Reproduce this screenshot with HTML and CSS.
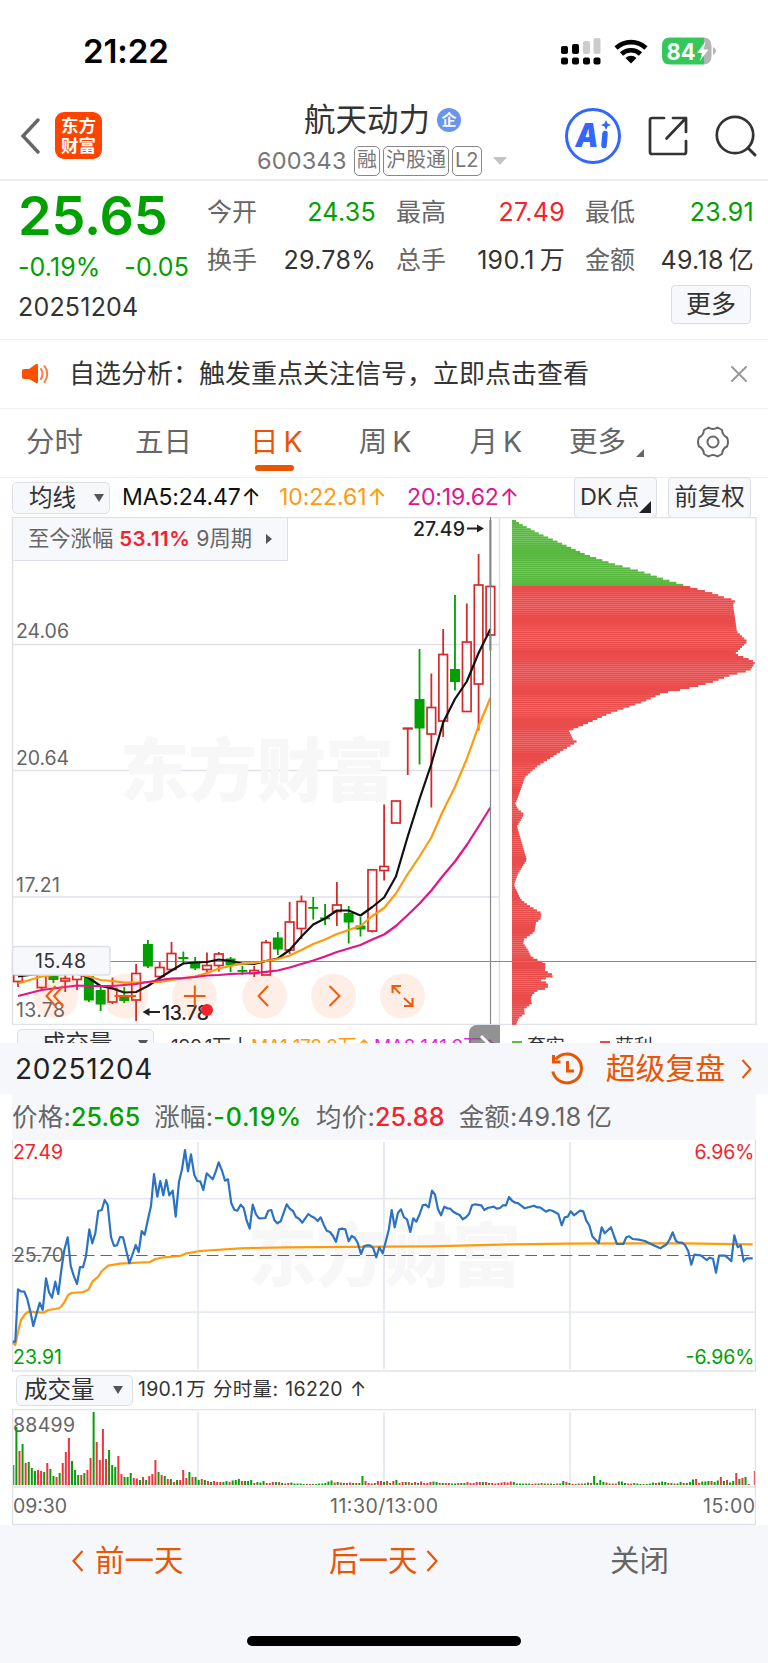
FILE: index.html
```html
<!DOCTYPE html>
<html lang="zh-CN">
<head>
    <meta charset="UTF-8">
    <meta name="viewport" content="width=device-width, initial-scale=1.0">
    <title>航天动力 600343</title>
    <link rel="stylesheet" href="styles.css">
</head>
<body>
    <div class="status-bar">
        <span class="clock">21:22</span>
        <svg class="status-icons" width="158" height="30" viewBox="560 36 158 30">
            <g fill="#000">
                <rect x="561" y="46" width="7" height="8" rx="2"/>
                <rect x="572" y="44" width="7" height="10" rx="2"/>
                <rect x="561" y="57.5" width="7" height="7" rx="2"/>
                <rect x="572" y="57.5" width="7" height="7" rx="2"/>
                <rect x="583" y="57.5" width="7" height="7" rx="2"/>
                <rect x="593.5" y="57.5" width="7" height="7" rx="2"/>
            </g>
            <rect x="583" y="41" width="7" height="13" rx="2" fill="#ccc"/>
            <rect x="593.5" y="38" width="7" height="16" rx="2" fill="#ccc"/>
            <g fill="none" stroke="#000" stroke-width="4.6">
                <path d="M616 48 A22 22 0 0 1 646 48"/>
                <path d="M621.5 54 A14 14 0 0 1 640.5 54"/>
            </g>
            <path d="M625.5 58 A8 8 0 0 1 636.5 58 L631 63.5 Z" fill="#000"/>
            <path d="M670 37.5 H704 V64.5 H670 Q662 64.5 662 56.5 V45.5 Q662 37.5 670 37.5 Z" fill="#34c759"/>
            <path d="M704 37.5 Q711.5 38 711.5 46 V56 Q711.5 64 704 64.5 Z" fill="#b4b4b4"/>
            <path d="M713 47 Q716 48.5 716 51 Q716 53.5 713 55 Z" fill="#b4b4b4"/>
            <text x="666.5" y="59.7" class="battery-text" textLength="29" lengthAdjust="spacingAndGlyphs">84</text>
            <path d="M705.5 41.5 L697 53 H702 L700 61 L708.5 49.5 H703.5 Z" fill="#fff"/>
        </svg>
    </div>

    <div class="nav-bar">
        <svg class="back" width="20" height="36" viewBox="0 0 20 36"><path d="M18 2 L3 18 L18 34" fill="none" stroke="#666" stroke-width="3.4" stroke-linecap="round"/></svg>
        <div class="logo">东方<br>财富</div>
        <div class="stock">
            <div class="stock-name">航天动力<span class="badge">企</span></div>
            <div class="stock-code">
                <span class="code">600343</span>
                <span class="tag">融</span><span class="tag">沪股通</span><span class="tag">L2</span>
                <i class="tri-down"></i>
            </div>
        </div>
        <div class="nav-actions">
            <svg width="58" height="58" viewBox="0 0 58 58">
                <circle cx="29" cy="29" r="26.5" fill="none" stroke="#36f" stroke-width="3"/>
                <text x="11.5" y="40" class="ai-text" textLength="23" lengthAdjust="spacingAndGlyphs">A</text>
                <path d="M41 26.500 L40 38.500" stroke="#36f" stroke-width="5.500" stroke-linecap="round"/>
                <path d="M42 13 L43.5 16.5 L47 18 L43.5 19.5 L42 23 L40.5 19.5 L37 18 L40.5 16.5 Z" fill="#36f"/>
            </svg>
            <svg width="42" height="42" viewBox="0 0 42 42">
                <path d="M17 3 H5 Q3 3 3 5 V37 Q3 39 5 39 H37 Q39 39 39 37 V26 M26 3 H39 V17 M39 3 L19.5 23.5" fill="none" stroke="#333" stroke-width="2.7" stroke-linecap="round" stroke-linejoin="round"/>
            </svg>
            <svg width="44" height="44" viewBox="0 0 44 44">
                <circle cx="21" cy="21" r="18.2" fill="none" stroke="#333" stroke-width="2.7"/>
                <path d="M34 34 L41 41" stroke="#333" stroke-width="3" stroke-linecap="round"/>
            </svg>
        </div>
    </div>

    <div class="quote">
        <div class="quote-main">
            <div class="price">25.65</div>
            <div class="change"><span>-0.19%</span><span>-0.05</span></div>
            <div class="date">20251204</div>
        </div>
        <div class="quote-side">
            <div class="quote-grid">
                <div class="cell"><span>今开</span><b class="down">24.35</b></div>
                <div class="cell"><span>最高</span><b class="up">27.49</b></div>
                <div class="cell"><span>最低</span><b class="down">23.91</b></div>
                <div class="cell"><span>换手</span><b>29.78%</b></div>
                <div class="cell"><span>总手</span><b>190.1<i class="unit">万</i></b></div>
                <div class="cell"><span>金额</span><b>49.18<i class="unit">亿</i></b></div>
            </div>
            <div class="more-btn">更多</div>
        </div>
    </div>

    <div class="notice">
        <svg width="28" height="24" viewBox="0 0 28 24">
            <path d="M2 7 H7 L14 2 Q16 1 16 3 V20 Q16 22 14 21 L7 17 H2 Q0 17 0 15 V9 Q0 7 2 7 Z" fill="#ff5000"/>
            <path d="M19 7 Q22 11.5 19 17 M22.5 4 Q28 11.5 22.5 20" fill="none" stroke="#ff7a3c" stroke-width="2" stroke-linecap="round"/>
        </svg>
        <span class="notice-text">自选分析：触发重点关注信号，立即点击查看</span>
        <svg width="16" height="16" viewBox="0 0 16 16"><path d="M1 1 L15 15 M15 1 L1 15" stroke="#999" stroke-width="2" stroke-linecap="round"/></svg>
    </div>

    <div class="tabs">
        <span>分时</span>
        <span>五日</span>
        <span class="active">日<i class="unit">K</i></span>
        <span>周<i class="unit">K</i></span>
        <span>月<i class="unit">K</i></span>
        <span class="tab-more">更多<i class="corner"></i></span>
        <svg width="34" height="34" viewBox="0 0 34 34" fill="none" stroke="#666" stroke-width="2">
            <path d="M12.5 2.5 Q17 5.5 21.5 2.5 L26 5 Q26.5 10.5 31 12.5 Q33 17 31 21.5 Q26.5 23.500 26 29 L21.5 31.5 Q17 28.5 12.5 31.5 L8 29 Q7.5 23.5 3 21.5 Q1 17 3 12.5 Q7.5 10.5 8 5 Z" stroke-linejoin="round"/>
            <circle cx="17" cy="17" r="5.5"/>
        </svg>
    </div>

    <div class="indicators">
        <div class="select ma-select">均线<i class="caret"></i></div>
        <span class="ma ma5">MA5:24.47<em>↑</em></span>
        <span class="ma ma10">10:22.61<em>↑</em></span>
        <span class="ma ma20">20:19.62<em>↑</em></span>
        <div class="box-btn dk">DK<i class="gap">点</i><i class="corner"></i></div>
        <div class="box-btn">前复权</div>
    </div>

    <div class="kline">
        <svg width="768" height="508" viewBox="0 517 768 508">
            <g class="grid">
                <path d="M12.5 517.5 H756 M12.5 517 V1024.5 H756 V517 M12 644.5 H499.5 M12 770.5 H499.5 M12 897 H499.5 M499.5 517 V1024"/>
            </g>
            <text class="watermark" x="120" y="796" textLength="274">东方财富</text>
            <g id="profile"></g>
            <g class="axis">
                <text x="16" y="637.5" textLength="53">24.06</text>
                <text x="16" y="764.5" textLength="53">20.64</text>
                <text x="16" y="891.5" textLength="44">17.21</text>
                <text x="16" y="1017" textLength="49">13.78</text>
            </g>
            <path class="cross" d="M12 961.5 H756"/>
            <g id="candles"></g>
            <g class="lines">
                <polyline id="ma5" stroke="#111"/>
                <polyline id="ma10" stroke="#ff9a0c"/>
                <polyline id="ma20" stroke="#e0148c"/>
            </g>
            <path class="cross" d="M490.5 517 V1024"/>
            <text class="mark" x="413" y="536" textLength="52">27.49</text>
            <path class="mark-arrow" d="M467 528.5 H480"/><path d="M484 528.5 l-7 -4 v8 z" fill="#222"/>
            <text class="mark" x="162" y="1019.5" textLength="47">13.78</text>
            <path class="mark-arrow" d="M147 1012 H160"/><path d="M142.5 1012 l7 -4 v8 z" fill="#222"/>
            <g class="round-btns">
                <circle cx="56" cy="996" r="22.5"/>
                <circle cx="125.5" cy="996" r="22.5"/>
                <circle cx="194.5" cy="996" r="22.5"/>
                <circle cx="264.5" cy="996" r="22.5"/>
                <circle cx="333.5" cy="996" r="22.5"/>
                <circle cx="402.5" cy="996" r="22.5"/>
            </g>
            <path class="btn-icons" d="M55.5 986 L46.5 996 L55.5 1006 M63 986 L54 996 L63 1006 M114.5 996 H136 M184 996 H205.5 M194.8 985.5 V1006.5 M268 986 L258.5 996 L268 1006 M329.5 986 L339.5 996 L329.5 1006 M392.5 993 V986 H401 M392.5 986 L400 993.5 M412.5 998 V1006 H404 M412.5 1006 L404 998"/>
            <circle cx="207" cy="1010" r="6" fill="#f5222d"/>
            <rect class="panel" x="12.5" y="946.5" width="97.5" height="28.5" rx="3"/>
            <text class="cursor-price" x="35" y="968" textLength="51">15.48</text>
        </svg>
        <div class="range-chip">至今涨幅 <b>53.11%</b> 9周期<i></i></div>
    </div>

    <div class="sub-row">
        <div class="select sub-select">成交量<i class="caret"></i></div>
        <span class="sub-vol">190.1万丨</span>
        <span class="sub-ma1">MA1:178.0万↑</span>
        <span class="sub-ma2">MA2:141.0万↑</span>
        <div class="expand"><svg width="31" height="19" viewBox="0 0 31 19"><path d="M12 11 L22 21" stroke="#fff" stroke-width="3"/></svg></div>
        <span class="legend trapped">套牢</span>
        <span class="legend profit">获利</span>
    </div>

    <div class="sheet">
        <div class="sheet-head">
            <span class="sheet-date">20251204</span>
            <svg width="34" height="34" viewBox="0 0 34 34" fill="none" stroke="#ea5504" stroke-width="3">
                <path d="M5.5 7.5 A14.5 14.5 0 1 1 2.8 19.5"/>
                <path d="M3.5 3 V10 H10.5 M17.5 9 V19 H24"/>
            </svg>
            <span class="replay">超级复盘</span>
            <svg width="11" height="20" viewBox="0 0 11 20"><path d="M1.5 1 L9.5 10 L1.5 19" fill="none" stroke="#ea5504" stroke-width="2"/></svg>
        </div>
        <div class="sheet-body">
            <div class="info">
                <span>价格:<b class="down">25.65</b></span>
                <span>涨幅:<b class="down wide">-0.19%</b></span>
                <span>均价:<b class="up">25.88</b></span>
                <span>金额:49.18<i class="unit">亿</i></span>
            </div>
            <svg class="minute" width="744" height="232" viewBox="12 1140 744 232">
                <path class="grid-thick" d="M198 1142 V1369 M384 1142 V1369 M570 1142 V1369 M12 1198.7 H756 M12 1312.2 H756"/>
                <path class="frame" d="M12.5 1140 V1371 M12 1371 H756 M755.5 1140 V1371"/>
                <text class="watermark" x="248" y="1281" textLength="273">东方财富</text>
                <path d="M12 1255.5 H752" stroke="#666" stroke-width="1.2" stroke-dasharray="11.7 6"/>
                <g class="axis">
                    <text x="13" y="1159" textLength="50" class="up">27.49</text>
                    <text x="13" y="1261.5" textLength="51">25.70</text>
                    <text x="13" y="1363.5" textLength="49" class="down">23.91</text>
                    <text x="754.5" y="1159" text-anchor="end" textLength="60" class="up">6.96%</text>
                    <text x="754.5" y="1363.5" text-anchor="end" textLength="69" class="down">-6.96%</text>
                </g>
                <g class="lines">
                    <polyline id="avg" stroke="#ff9a0c"/>
                    <polyline id="price" stroke="#2b72c4"/>
                </g>
            </svg>
            <div class="vol-head">
                <div class="select vol-select">成交量<i class="caret"></i></div>
                <span>190.1<i class="unit">万</i></span><span>分时量:</span><span>16220</span><span>↑</span>
            </div>
            <svg class="volume" width="744" height="116" viewBox="12 1409 744 116">
                <path class="grid-thick" d="M198 1412 V1485 M384 1412 V1485 M570 1412 V1485"/>
                <g class="axis">
                    <text x="13" y="1431.5" textLength="62">88499</text>
                    <text x="13" y="1513" textLength="54">09:30</text>
                    <text x="384" y="1513" text-anchor="middle" textLength="108">11:30/13:00</text>
                    <text x="755" y="1513" text-anchor="end" textLength="52">15:00</text>
                </g>
                <g id="volume"></g>
                <path class="frame" d="M12 1409.5 H756 M12.5 1409 V1525 M755.5 1409 V1525 M12 1487 H756 M12 1524.5 H756"/>
            </svg>
        </div>
        <div class="sheet-foot">
            <span class="prev"><svg width="12" height="22" viewBox="0 0 12 22"><path d="M10.5 1 L1.5 11 L10.5 21"/></svg>前一天</span>
            <span class="next">后一天<svg width="12" height="22" viewBox="0 0 12 22"><path d="M1.5 1 L10.5 11 L1.5 21"/></svg></span>
            <span class="close">关闭</span>
        </div>
        <div class="home-indicator"></div>
    </div>

    <script src="script.js"></script>
</body>
</html>
```
FILE: styles.css
```css
* {
    box-sizing: border-box;
}

body {
    margin: 0;
    width: 768px;
    height: 1663px;
    overflow: hidden;
    background: #fff;
    color: #333;
    font-family: Inter, "Noto Sans CJK SC", sans-serif;
    font-size: 25px;
    line-height: 1;
    white-space: nowrap;
}

svg {
    display: block;
    flex: none;
}

b, em, i {
    font-weight: 400;
    font-style: normal;
}

.up {
    color: #f5222d;
    fill: #f5222d;
}

.down {
    color: #00a000;
    fill: #00a000;
}

.unit {
    margin-left: 5px;
}

/* status bar */
.status-bar {
    height: 100px;
    padding: 2px 50px 0 83px;
    display: flex;
    align-items: center;
    justify-content: space-between;
}

.clock {
    font-size: 33px;
    font-weight: 600;
    color: #000;
    letter-spacing: -0.1px;
}

.battery-text {
    font-size: 23px;
    font-weight: 700;
    fill: #fff;
}

/* nav bar */
.nav-bar {
    height: 81px;
    border-bottom: 2px solid #ececec;
    display: flex;
    position: relative;
}

.back {
    margin: 18px 0 0 20px;
}

.logo {
    width: 47px;
    height: 47px;
    margin: 12px 0 0 15px;
    padding-top: 4px;
    border-radius: 9px;
    background: #ff4400;
    color: #fff;
    font-size: 17.5px;
    font-weight: 700;
    line-height: 20px;
    text-align: center;
}

.stock {
    margin-left: 155px;
    width: 252px;
}

.stock-name {
    display: flex;
    align-items: center;
    padding-left: 47px;
    margin-top: 4px;
    font-size: 31.5px;
}

.badge {
    width: 24px;
    height: 24px;
    margin-left: 7px;
    border-radius: 50%;
    background: #6a95ee;
    color: #fff;
    font-size: 15px;
    font-weight: 700;
    line-height: 23px;
    text-align: center;
}

.stock-code {
    display: flex;
    align-items: center;
    margin-top: 10px;
    color: #777;
}

.code {
    width: 97px;
    font-size: 23.5px;
    letter-spacing: 0.2px;
}

.tag {
    height: 30px;
    margin-right: 3px;
    padding: 0 2px;
    border: 1.5px solid #888;
    border-radius: 5px;
    font-size: 20px;
    line-height: 27px;
}

.tri-down {
    margin-left: 8px;
    border: 7px solid transparent;
    border-top: 8px solid #c4c4c4;
    border-bottom: 0;
}

.nav-actions {
    position: absolute;
    left: 563.5px;
    top: 7px;
    display: flex;
    align-items: center;
    gap: 25px;
}

.ai-text {
    font-size: 33px;
    font-weight: 900;
    font-style: italic;
    fill: #36f;
}

/* quote */
.quote {
    height: 159px;
    border-bottom: 1px solid #f0f0f0;
    display: flex;
    padding-left: 18px;
}

.quote-main {
    width: 189px;
}

.price {
    margin-top: 8px;
    font-size: 54px;
    font-weight: 600;
    line-height: 54px;
    letter-spacing: -0.2px;
    color: #00a000;
}

.change {
    display: flex;
    justify-content: space-between;
    width: 171px;
    margin-top: 12px;
    color: #00a000;
    font-size: 25px;
    line-height: 25px;
    letter-spacing: 0.1px;
}

.date {
    margin-top: 15px;
    font-size: 25px;
    line-height: 25px;
    letter-spacing: 0.2px;
}

.quote-grid {
    display: grid;
    grid-template-columns: 169px 169px 169px;
    column-gap: 20px;
    row-gap: 17px;
    margin-top: 16px;
}

.cell {
    display: flex;
    justify-content: space-between;
    align-items: center;
    height: 31px;
    font-size: 25px;
}

.cell span {
    color: #666;
}

.cell b {
    letter-spacing: 0.3px;
}

.more-btn {
    width: 80px;
    height: 39px;
    margin: 9px 0 0 464px;
    border: 1.5px solid #d9dce3;
    border-radius: 4px;
    background: #f7f8fb;
    font-size: 25px;
    line-height: 36px;
    text-align: center;
}

/* notice */
.notice {
    height: 69px;
    border-bottom: 1px solid #f0f0f0;
    display: flex;
    align-items: center;
    padding: 0 21px 0 22px;
}

.notice-text {
    flex: 1;
    margin-left: 19px;
    font-size: 26px;
}

/* period tabs */
.tabs {
    height: 69px;
    border-bottom: 1px solid #f0f0f0;
    display: flex;
    align-items: center;
    padding: 0 38px 2px 26px;
    font-size: 28.5px;
    color: #666;
}

.tabs span {
    position: relative;
    margin-right: 52px;
}

.tabs span:nth-child(2) {
    margin-right: 58px;
}

.tabs span:nth-child(3) {
    margin-right: 56px;
}

.tabs span:nth-child(4) {
    margin-right: 58px;
}

.tabs span:nth-child(5) {
    margin-right: 47px;
}

.tabs .active {
    color: #ea5504;
}

.tabs .active::after {
    content: "";
    position: absolute;
    left: 5px;
    bottom: -15px;
    width: 39px;
    height: 6px;
    border-radius: 3px;
    background: #ea5504;
}

.corner {
    position: absolute;
    right: -18px;
    bottom: -1px;
    border-bottom: 8px solid #666;
    border-left: 8px solid transparent;
}

.tabs svg {
    margin-left: auto;
}

/* indicator row */
.indicators {
    height: 39px;
    display: flex;
    align-items: center;
    padding: 0 17px 0 12px;
}

.select {
    display: flex;
    align-items: center;
    justify-content: space-between;
    border: 1.5px solid #dcdfe5;
    border-radius: 5px;
    background: #f7f8fb;
    font-size: 23.5px;
}

.caret {
    border: 5px solid transparent;
    border-top: 8px solid #555;
    border-bottom: 0;
}

.ma-select {
    width: 98px;
    height: 32px;
    padding: 0 5px 0 16px;
}

.ma {
    font-size: 23px;
    letter-spacing: -0.1px;
}

.ma em {
    font-size: 23px;
    margin-left: 1px;
}

.ma5 {
    width: 145px;
    margin-left: 12px;
    color: #111;
}

.ma10 {
    width: 116px;
    margin-left: 12px;
    color: #ff9a0c;
}

.ma20 {
    margin-left: 12px;
    color: #e0148c;
}

.box-btn {
    position: relative;
    width: 83px;
    height: 41px;
    border: 1.5px solid #dcdfe5;
    border-radius: 4px;
    background: #f7f8fb;
    font-size: 23.5px;
    line-height: 38px;
    text-align: center;
}

.dk {
    margin-left: auto;
    margin-right: 11px;
    padding-right: 12px;
}

.gap {
    margin-left: 3px;
}

.dk .corner {
    right: 5px;
    bottom: 4px;
    border-bottom: 12px solid #222;
    border-left: 12px solid transparent;
}

/* daily chart */
.kline {
    position: relative;
    height: 508px;
}

.grid path, .frame {
    fill: none;
    stroke: #dfe2ea;
    stroke-width: 1.5;
}

.grid-thick {
    fill: none;
    stroke: #e6e9f0;
    stroke-width: 1.8;
}

.watermark {
    font-size: 69px;
    font-weight: 900;
    fill: #f7f7f7;
}

.axis {
    font-size: 19.5px;
    fill: #666;
}

.cross {
    stroke: #888;
    stroke-width: 1.2;
}

.lines {
    fill: none;
    stroke-width: 2.2;
    stroke-linejoin: round;
}

.mark {
    font-size: 19.5px;
    font-weight: 500;
    fill: #222;
}

.mark-arrow {
    stroke: #222;
    stroke-width: 2;
}

.round-btns {
    fill: #ff6414;
    opacity: 0.1;
}

.btn-icons {
    fill: none;
    stroke: #f25a0a;
    stroke-width: 2;
}

.panel {
    fill: #f7f8fb;
    stroke: #dcdfe5;
    stroke-width: 1.5;
}

.cursor-price {
    font-size: 19.5px;
    fill: #333;
}

.range-chip {
    position: absolute;
    left: 12px;
    top: 0;
    width: 276px;
    height: 44px;
    padding-left: 15px;
    border: 1.5px solid #dcdfe5;
    background: #f7f8fb;
    color: #666;
    font-size: 21.3px;
    line-height: 40px;
}

.range-chip b {
    color: #f5222d;
    font-weight: 600;
    font-size: 20.5px;
    letter-spacing: 0.5px;
}

.range-chip i {
    display: inline-block;
    margin: 0 0 2px 14px;
    border: 5px solid transparent;
    border-left: 6px solid #555;
    border-right: 0;
}

/* cut-off row below the chart */
.sub-row {
    position: relative;
    height: 18px;
    overflow: hidden;
    display: flex;
    align-items: flex-start;
    padding: 4px 0 0 17px;
    font-size: 19px;
}

.sub-row span {
    flex: none;
    padding-top: 8px;
    letter-spacing: -0.3px;
}

.sub-select {
    flex: none;
    width: 137px;
    height: 34px;
    padding: 0 5px 4px 24px;
}

.sub-vol {
    width: 80px;
    margin-left: 17px;
}

.sub-ma1 {
    width: 123px;
    color: #ff9a0c;
}

.sub-ma2 {
    width: 137px;
    color: #e61ee6;
}

.expand {
    position: absolute;
    left: 469px;
    top: 0;
    height: 19px;
    border-radius: 8px 0 0 0;
    background: rgba(110, 110, 110, 0.75);
}

.legend {
    width: 88px;
    position: relative;
    padding-left: 16px;
}

.legend::before {
    content: "";
    position: absolute;
    left: 1px;
    top: 12px;
    width: 10px;
    height: 3px;
    background: #5dbb46;
}

.profit::before {
    background: #f04848;
}

/* replay sheet */
.sheet {
    background: #f6f7fa;
    height: 620px;
}

.sheet-head {
    height: 51px;
    display: flex;
    align-items: center;
    padding: 0 16px 0 15px;
    color: #222;
}

.sheet-date {
    flex: 1;
    font-size: 28px;
    letter-spacing: 0.6px;
}

.replay {
    margin: 0 16px 0 22px;
    font-size: 29.8px;
    color: #ea5504;
}

.sheet-body {
    background: #fff;
    height: 431px;
    padding: 0 12px;
}

.info {
    height: 46px;
    display: flex;
    align-items: center;
    background: #f6f7fa;
    color: #666;
    font-size: 25.5px;
    letter-spacing: 0.2px;
}

.info span {
    margin-right: 14px;
}

.info b {
    font-weight: 500;
    font-size: 25px;
}

.info .wide {
    letter-spacing: 0.9px;
}

.vol-head {
    height: 38px;
    display: flex;
    align-items: center;
    padding-left: 4px;
    font-size: 19.5px;
    letter-spacing: 0.3px;
}

.minute {
    margin-bottom: -1px;
}

.vol-head span {
    margin-left: 7px;
}

.vol-head span:nth-of-type(1) {
    margin-left: 5px;
}

.vol-head .unit {
    margin-left: 3px;
}

.vol-select {
    width: 117px;
    height: 31px;
    padding: 0 9px 0 7px;
    letter-spacing: 0;
}

.sheet-foot {
    height: 72px;
    display: flex;
    align-items: center;
    color: #ea5504;
    font-size: 29.5px;
}

.sheet-foot span {
    display: flex;
    align-items: center;
    gap: 11px;
}

.sheet-foot path {
    fill: none;
    stroke: #ea5504;
    stroke-width: 2.2;
}

.prev {
    width: 257px;
    margin-left: 72px;
}

.sheet-foot .next {
    width: 281px;
    gap: 8px;
}

.close {
    color: #666;
}

.home-indicator {
    width: 274px;
    height: 10px;
    margin: 39px 0 0 247px;
    border-radius: 5px;
    background: #000;
}
```
FILE: script.js
```js
const NS = 'http://www.w3.org/2000/svg';
const RED = '#d42a2a';
const GREEN = '#00a000';

function rect(parent, x, y, w, h, fill, stroke) {
    const el = document.createElementNS(NS, 'rect');
    el.setAttribute('x', x);
    el.setAttribute('y', y);
    el.setAttribute('width', w);
    el.setAttribute('height', h);
    el.setAttribute('fill', fill);
    if (stroke) {
        el.setAttribute('stroke', stroke);
        el.setAttribute('stroke-width', 1.7);
    }
    parent.appendChild(el);
}

// [type, high, body top, body bottom, low]
const candles = [
    ['r', 972, 975, 981.5, 987], ['r', 964, 966, 972, 973], ['r', 966, 970, 987.5, 990],
    ['g', 968, 972, 980, 983], ['r', 974, 978.5, 981, 992], ['r', 966, 969, 979.5, 990],
    ['g', 970, 976, 1000.5, 1002], ['g', 986, 990, 1004.5, 1011], ['r', 977.5, 988.5, 1002, 1004],
    ['g', 987, 995, 1001, 1003], ['r', 964, 973.5, 1000, 1021], ['g', 940, 944, 966.5, 968],
    ['r', 962, 967.5, 976.5, 978], ['r', 942, 953.5, 969.5, 970], ['g', 951.5, 957, 959, 963],
    ['g', 957, 962.5, 968.5, 970], ['r', 952.5, 965.5, 969.5, 973], ['r', 952, 954, 965.5, 971.5],
    ['g', 957, 958.5, 965.5, 972], ['g', 966, 970, 971.8, 975], ['r', 966, 970.5, 973.5, 977],
    ['r', 940, 942.5, 975, 975], ['g', 932, 937.5, 949.5, 955], ['r', 902, 922, 950, 954],
    ['r', 895.5, 901.5, 928.5, 939], ['g', 897, 907, 908.8, 919.5], ['g', 904, 917.5, 919.3, 925],
    ['r', 882, 905, 911.5, 926], ['g', 906, 913, 922.5, 943.5], ['g', 917, 925.5, 929.5, 936.5],
    ['r', 869.5, 869.8, 931, 932.5], ['r', 804.5, 866.5, 870.5, 880.5], ['r', 801, 801, 823, 823],
    ['r', 728.5, 728.2, 728.8, 775], ['g', 649, 699, 728.5, 764.5], ['r', 673.5, 707.5, 734, 807.5],
    ['r', 629, 654.5, 721, 737], ['g', 595, 669, 682, 690.5], ['r', 603.5, 642, 711.5, 711.5],
    ['r', 554, 585, 684, 730.5], ['r', 520, 586.5, 635, 650.5]
];
const step = 11.81;
const cx = i => 18 + i * step;

const candleLayer = document.getElementById('candles');
candles.forEach(([type, high, top, bottom, low], i) => {
    const x = cx(i);
    if (type === 'g') {
        rect(candleLayer, x - 0.9, high, 1.8, low - high, GREEN);
        rect(candleLayer, x - 5, top, 10, bottom - top, GREEN);
    } else {
        rect(candleLayer, x - 0.9, high, 1.8, Math.max(top - high, 0), RED);
        rect(candleLayer, x - 0.9, bottom, 1.8, Math.max(low - bottom, 0), RED);
        rect(candleLayer, x - 4.3, top, 8.6, bottom - top, 'none', RED);
    }
});

// moving averages, one value per candle
const averages = {
    ma5: [976.5, 975, 974, 972, 971, 973, 978, 986, 988.5, 992.5, 992, 986, 978, 970.5, 963.5, 962.5, 962, 959.5, 961, 963.5, 964, 961, 958.5, 950, 936.5, 924.5, 918.5, 910.5, 910.5, 915.5, 907, 897.5, 876.5, 836.5, 799, 764, 722.5, 699, 681.5, 653, 629],
    ma10: [983.5, 980, 976.5, 975, 974, 974, 976.5, 980, 981, 982.7, 982.7, 982, 982, 980, 978.5, 976.5, 973, 968.5, 966, 963.5, 963, 961, 959, 955.5, 950, 944, 939.5, 934, 930, 926, 916, 908, 893.5, 874, 856.5, 837.5, 810.5, 787, 759, 726, 698],
    ma20: [996, 993, 990, 988.5, 987, 985.5, 986, 986, 986, 985, 984, 982, 980, 978.5, 978, 977, 975.5, 975, 974, 973.5, 973, 971.8, 970.5, 967.5, 964, 960.5, 956.5, 952, 948.5, 945, 939.5, 934.5, 926, 915, 903.5, 890.5, 875.5, 861.5, 845, 826.5, 807.5]
};
for (const id in averages) {
    document.getElementById(id).setAttribute('points', averages[id].map((y, i) => cx(i) + ',' + y).join(' '));
}

// chip distribution: [y, width]
const chips = [
    [520, 4], [522.7, 8], [532, 26], [541.7, 48], [554, 75], [562.7, 101], [570, 128], [579, 155], [585, 175],
    [586.7, 181], [592.3, 201], [597.7, 216], [599, 224], [603.3, 221], [630.7, 225], [640.3, 235.5], [652.7, 223],
    [659.3, 240], [661.7, 243], [669.3, 238], [674.3, 218], [680.7, 201], [685.7, 183], [690, 163], [691.7, 151],
    [700.7, 131], [706.3, 115], [712, 98], [719.7, 81], [730, 57], [738.3, 61], [740.7, 65], [750.7, 48], [765.3, 25],
    [776, 13], [799, 5], [802.7, 3], [808, 6], [813, 12], [825.3, 5], [858.7, 14.7], [872.7, 6], [883.7, 2],
    [898.3, 8.7], [904, 16], [912, 29.5], [917.7, 28.5], [921.7, 24], [930.7, 22.5], [938.3, 12], [942.3, 11.3],
    [949, 16], [956, 19.3], [957.3, 23], [960, 27.5], [961.7, 33.5], [970, 33], [972.7, 39.7], [975.7, 40.7],
    [977.7, 32.3], [980, 28], [981.3, 34], [984, 36.5], [986.7, 35.7], [988.7, 29.7], [990, 24], [994.3, 19.7],
    [998.3, 18.7], [1002.3, 19.7], [1008.3, 12], [1012.3, 12.7], [1017.3, 6.3], [1024, 4]
];
const profile = document.getElementById('profile');
const rowHeight = 2.06;
let k = 0;
for (let y = 520; y < 1023; y += rowHeight) {
    while (k < chips.length - 2 && chips[k + 1][0] <= y) k++;
    const [y0, w0] = chips[k];
    const [y1, w1] = chips[k + 1];
    const w = w0 + (w1 - w0) * (y - y0) / (y1 - y0);
    rect(profile, 512, y, w, rowHeight + 0.15, y < 585 ? '#58b840' : '#ea4b4b');
}

// intraday lines, stored in @3x pixels from the top left of the panel
const toPoints = s => s.split(' ').map(p => {
    const [x, y] = p.split(',').map(Number);
    return (x / 3).toFixed(1) + ',' + (1130 + y / 3).toFixed(1);
}).join(' ');

const morning = '38,635 46,635 54,478 63,484 73,485 82,507 92,550 100,588 110,550 119,518 128,540 138,445 147,487 156,503 166,455 175,492 184,420 193,360 203,322 212,408 221,437 231,462 240,411 249,412 258,378 268,298 277,340 286,310 295,243 305,240 314,210 323,225 333,321 342,348 351,346 360,321 369,322 379,362 388,400 397,375 407,345 416,366 425,303 434,314 444,268 453,228 462,132 472,200 481,153 490,196 499,150 508,196 518,182 527,260 537,155 546,118 555,60 564,124 573,73 583,135 592,153 601,154 610,180 620,130 638,148 647,125 656,97 666,122 675,152 684,148 694,220 703,239 712,242 722,224 731,234 740,272 749,296 758,224 768,253 777,265 796,264 805,242 814,240 823,270 832,280 842,274 851,248 860,223 869,236 879,243 888,261 897,266 907,278 925,252 934,259 943,263 953,273 962,262 971,284 980,302 990,306 999,318 1008,335 1017,298 1026,296 1036,298 1046,334 1055,318 1064,323 1073,338 1083,372 1092,349 1101,346 1110,346 1120,355 1129,382 1138,352 1148,370';
const afternoon = '1157,335 1166,300 1175,240 1184,292 1194,248 1203,238 1212,262 1221,268 1231,306 1240,265 1249,275 1258,255 1268,226 1277,224 1286,232 1296,182 1305,194 1314,238 1323,256 1333,230 1342,235 1351,236 1360,245 1370,251 1379,255 1388,268 1398,262 1407,252 1416,226 1426,223 1444,226 1453,240 1463,234 1481,230 1490,236 1500,234 1509,226 1518,226 1527,201 1537,213 1546,218 1555,220 1574,235 1602,227 1611,232 1620,232 1638,245 1648,240 1657,242 1675,252 1685,286 1694,262 1703,260 1712,244 1722,256 1740,242 1750,244 1759,272 1768,286 1777,319 1796,340 1805,292 1814,310 1833,292 1842,318 1851,342 1870,342 1879,322 1888,319 1898,327 1916,329 1935,333 1954,343 1981,355 2000,343 2009,328 2018,307 2028,333 2037,338 2046,338 2055,345 2065,364 2074,404 2083,374 2102,376 2120,390 2129,383 2139,386 2148,428 2157,377 2176,377 2185,385 2194,394 2203,316 2213,352 2222,346 2231,394 2240,385 2258,385';
document.getElementById('price').setAttribute('points', toPoints(morning + ' ' + afternoon));
document.getElementById('avg').setAttribute('points', toPoints('38,638 46,645 54,605 63,570 74,554 85,545 130,548 145,540 166,537 178,534 185,528 192,518 205,494 215,489 250,486 266,478 278,454 295,440 305,423 325,407 360,401 450,396 465,388 490,382 540,378 560,370 600,363 720,355 860,352 1152,350 1290,349 1540,343 1700,341 1860,340 2050,340 2258,343'));

// volume per minute, negative = falling
const volumes = [
    -20, -58, 34, -41, 22, -23, -17, -14, 15, 14, -13, 22, -16, -9, 8, -12, 22, 33, 47, -24, -15, -10, 10, -12, 15, 27,
    -73, 43, 25, 56, 26, -35, -20, -18, 29, 11, -8, -8, -12, 7, 6.5, -5, 8, -5, 9, 11, 25, -13, 10, -9, 6, -6, 3, -5, 5,
    15, 7, -13, 8, -8, -5, 6, -5, 4, -3, 4, 3, 3, -3, -4, 3, -4.5, -5, -6, 4, -4, -4, -5, 2, -3, -2.5, -4, 2, 2, 3, -3,
    3, -2, 1.5, 2, -2.5, -1.5, -1.5, -1.5, -1, 1, 1, -1, -1, -1.5, -1.5, -2, -3.5, -4.5, 2.5, -3, 2.5, -2, 2, 2.5, -2, 2,
    -2, -9, 4, 2, 1.5, -2, 4, 4, -3, 4, -2, 4, -5, 2, 3, -3, 3, -2, 3, -2, 3.5, 2, 2, 3, -3.5, -3, 2, -2, 2, 2, -1.5, -1.5,
    2, -2, -2, 3, 2, 2, 3, 3, -3, 3, -2, 2, 1.5, 2, 2.5, 3, 2.5, 3.5, -3, -1.5, -1.5, -1.5, -1.5, -1.5, 1, 1.5, -1.5, 2,
    -1.5, 1.5, -1.5, -1, 1.5, -1.5, -4, 3, -2, 1, -1, 1.5, 1.5, -1.5, -2.5, 2, -9, -2, -5, -3, 2.5, -1.5, 1.5, 1.5, -3.5,
    -3.5, -2, 1.5, 1.5, -2, -1.5, -1, 1, -1, -1.5, -2.5, 2, -2.5, -3.5, -3, 2, -2, 1.5, -1.5, -3, 2, -2, -3, -5.5, 6, 2,
    -3.5, -3.5, -4, 4, -3, -4.5, 8, -4, 5, -2.5, -4, 12, -6, 7, -8, 1, 0, 14
];
const volumeLayer = document.getElementById('volume');
volumes.forEach((v, i) => {
    const h = Math.abs(v);
    rect(volumeLayer, 12.3 + i * 741.5 / (volumes.length - 1), 1485 - h, 2, h, v < 0 ? '#0a9d0a' : '#f0343c');
});
```
